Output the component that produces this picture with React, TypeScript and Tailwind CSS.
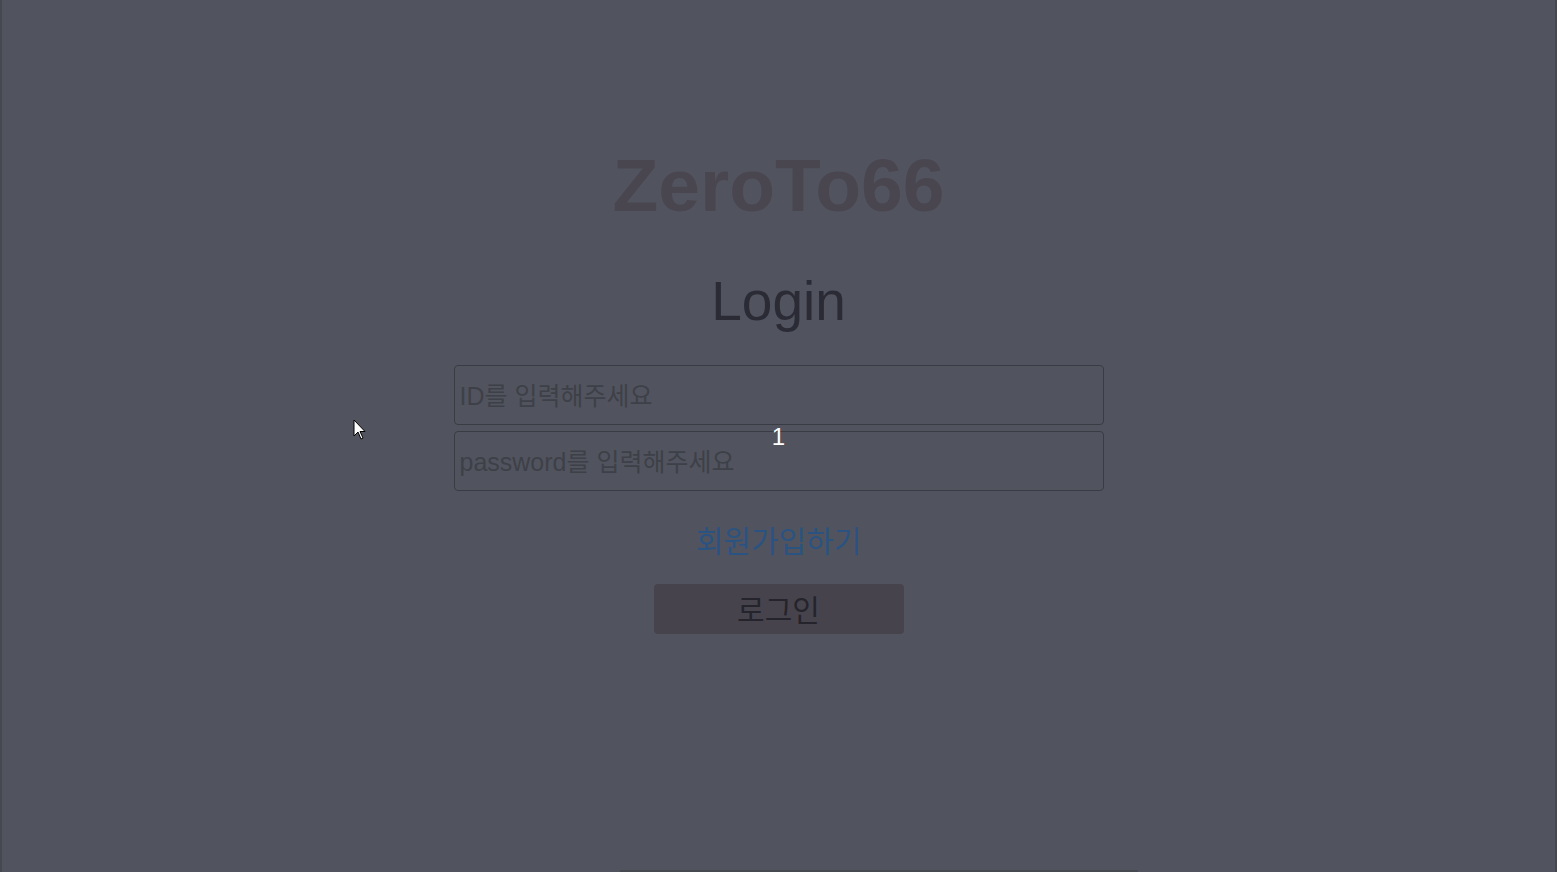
import React from "react";

export default function App() {
  const font = { fontFamily: '"Liberation Sans", "Noto Sans CJK KR", Arial, sans-serif' };
  return (
    <div
      className="relative h-[872px] w-full overflow-hidden bg-[#51545e] border-l-2 border-r-2 border-[#464850]"
      style={font}
    >
      <div className="flex flex-col items-center pt-[143px]">
        <h1 className="text-[75px] leading-[84px] font-bold text-[#4a4650]">ZeroTo66</h1>
        <h2 className="mt-[43px] text-[55px] leading-[62px] text-[#2b2b36]">Login</h2>
        <div className="relative mt-[33px] flex w-[650px] flex-col gap-[6px]">
          <input
            className="h-[60px] w-full rounded-[4px] border border-[#3a3c44] bg-transparent px-[5px] pt-[2px] text-[25px] text-[#3e4048] placeholder:text-[#3e4048] outline-none"
            placeholder="ID를 입력해주세요"
            style={font}
          />
          <input
            className="h-[60px] w-full rounded-[4px] border border-[#3a3c44] bg-transparent px-[5px] pt-[2px] text-[25px] text-[#3e4048] placeholder:text-[#3e4048] outline-none"
            placeholder="password를 입력해주세요"
            type="password"
            style={font}
          />
          <span className="absolute left-1/2 top-[58px] -translate-x-1/2 text-[24px] leading-[28px] text-white">1</span>
        </div>
        <a className="mt-[31px] text-[30px] leading-[40px] text-[#2b5381]">회원가입하기</a>
        <button className="mt-[22px] h-[50px] w-[250px] rounded-[4px] bg-[#46434d] pt-[3px] text-[30px] text-[#25242c]" style={font}>
          로그인
        </button>
      </div>
      <div className="absolute bottom-0 left-[618px] h-[2px] w-[518px] bg-[#474951]" />
      <svg className="absolute left-[351px] top-[419px]" width="14" height="22" viewBox="0 0 14 22">
        <path d="M1 1 L1 17 L5 13 L8 20 L10 19 L7 12.5 L12 12.5 Z" fill="#fff" stroke="#000" strokeWidth="1" />
      </svg>
    </div>
  );
}
